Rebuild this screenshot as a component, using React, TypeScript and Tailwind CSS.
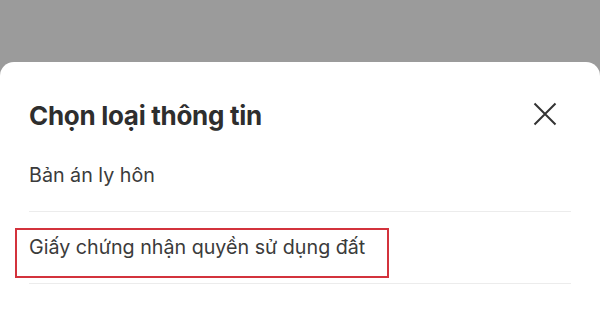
import React from 'react';

const items = ['Bản án ly hôn', 'Giấy chứng nhận quyền sử dụng đất'];

export default function App() {
  return (
    <div
      className="w-[600px] h-[318px] bg-[#9b9b9b] flex flex-col overflow-hidden"
      style={{ fontFamily: 'Inter, "Noto Sans", sans-serif' }}
    >
      <div className="h-[62px] shrink-0" />
      <div className="flex-1 bg-white rounded-t-[14px] px-[29px]">
        <div className="h-[78px] flex items-center justify-between pt-[28px]">
          <h1 className="text-[26px] font-bold text-[#2e2e2e] tracking-[-0.3px]">Chọn loại thông tin</h1>
          <button className="mr-[14px] mt-[-2px] text-[#333]" aria-label="close">
            <svg width="24" height="24" viewBox="0 0 24 24" fill="none" stroke="currentColor" strokeWidth="2">
              <path d="M1.5 1.5 L22.5 22.5 M22.5 1.5 L1.5 22.5" />
            </svg>
          </button>
        </div>
        <ul>
          {items.map((t, i) => (
            <li
              key={t}
              className="relative h-[72px] flex items-center border-b border-[#ececec] text-[19.7px] text-[#3b3b3b]"
            >
              {t}
              {i === 1 && (
                <span className="absolute left-[-14px] top-[16px] w-[374px] h-[50px] border-2 border-[#d3323c]" />
              )}
            </li>
          ))}
        </ul>
      </div>
    </div>
  );
}
